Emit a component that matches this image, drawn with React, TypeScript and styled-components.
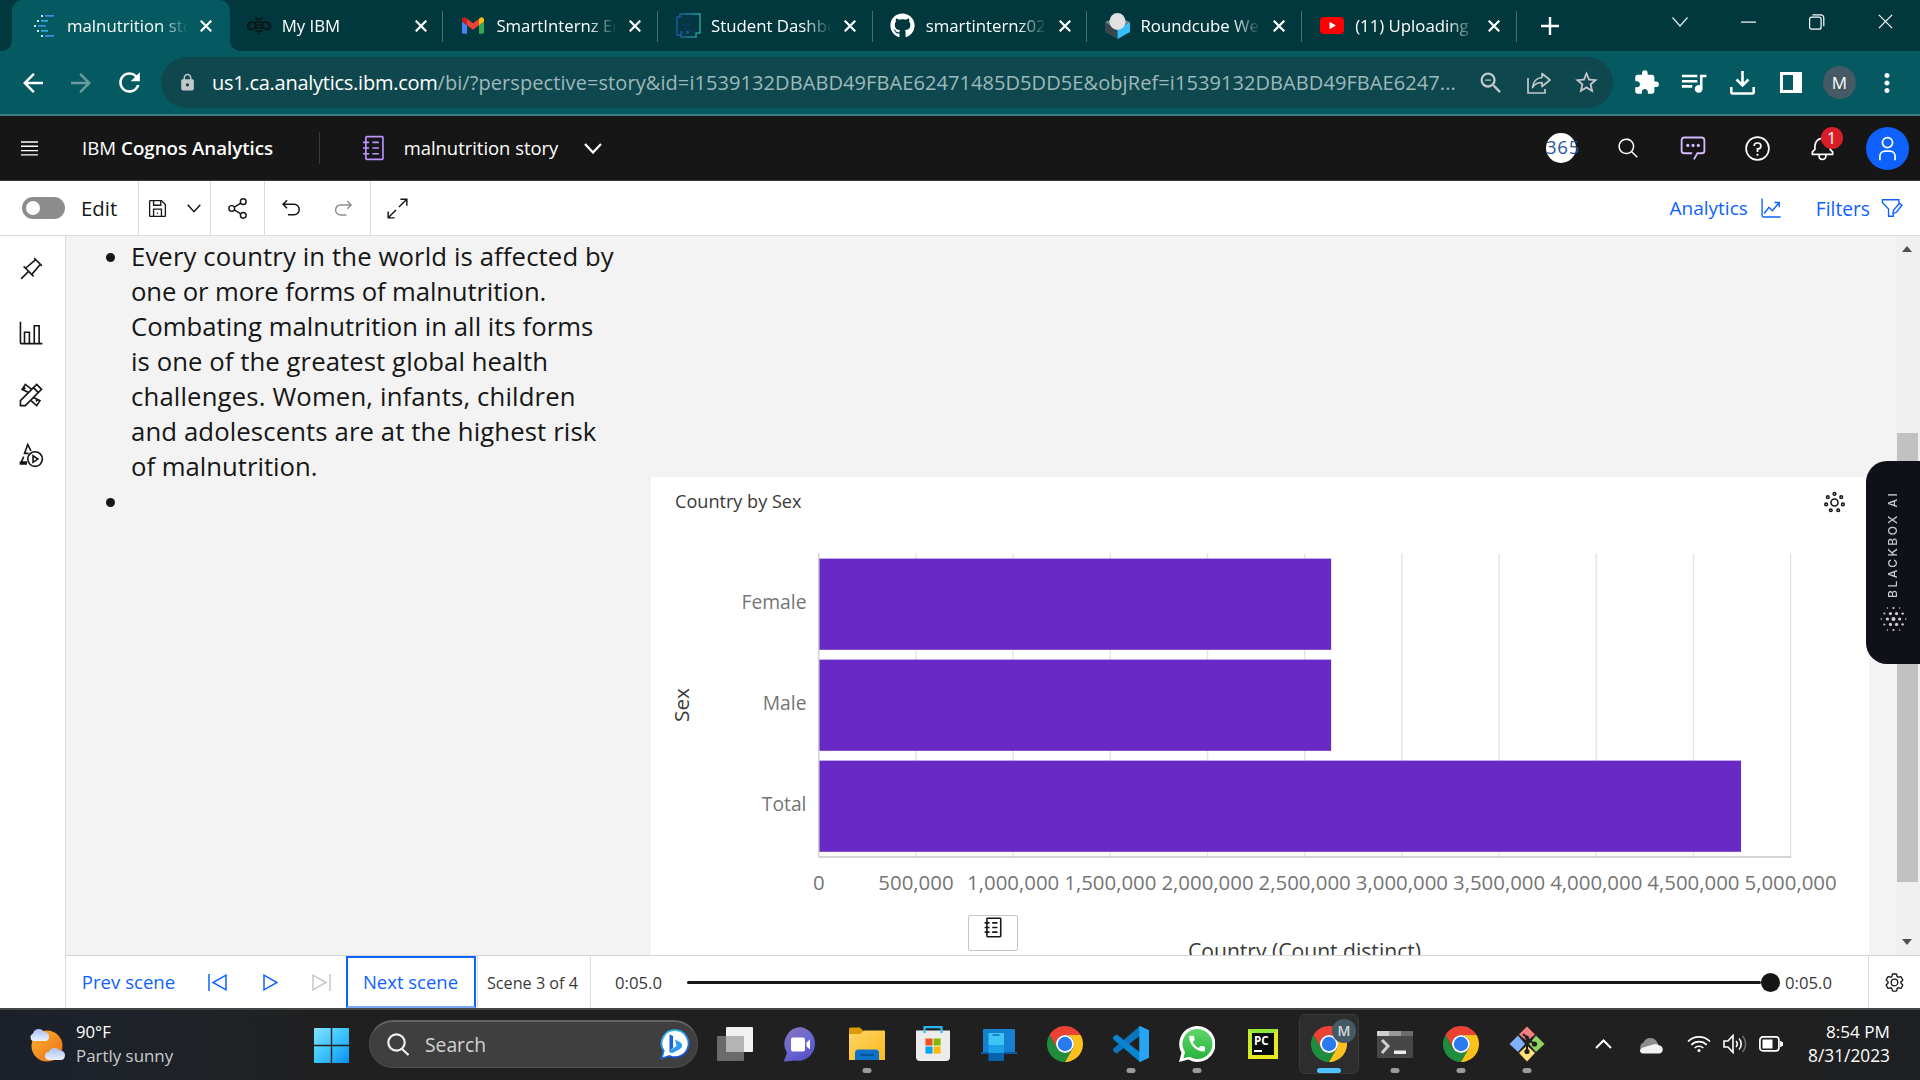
import React from 'react';
import styled, { createGlobalStyle, css } from 'styled-components';
import {
  MdArrowBack, MdArrowForward, MdExtension, MdLock, MdMoreVert,
  MdQueueMusic, MdRefresh, MdStarBorder, MdZoomOut,
} from 'react-icons/md';
import { FaGithub } from 'react-icons/fa';

const ui = `"Open Sans", "Noto Sans", sans-serif`;

const GlobalStyle = createGlobalStyle`
  *, *::before, *::after { box-sizing: border-box; }
  body { margin: 0; font-family: ${ui}; overflow: hidden; }
  svg { display: block; flex: none; }
`;

const Screen = styled.div`
  width: 1920px;
  height: 1080px;
  display: flex;
  flex-direction: column;
  overflow: hidden;
`;

const Cell = styled.div<{ $w: number; $up?: number }>`
  flex: none;
  width: ${p => p.$w}px;
  height: 100%;
  display: flex;
  align-items: center;
  justify-content: center;
  padding-bottom: ${p => p.$up ?? 0}px;
`;

const Spacer = styled.div`
  flex: 1;
`;

const Label = styled.span<{ $size: number; $track?: number }>`
  flex: none;
  white-space: nowrap;
  font-size: ${p => p.$size}px;
  letter-spacing: ${p => p.$track ?? 0}px;
`;

/* ---------- browser tabs ---------- */

const TabStrip = styled.div`
  flex: none;
  display: flex;
  height: 51px;
  padding-left: 14px;
  background: #00383d;
`;

const TabBox = styled.div<{ $active?: boolean; $divider?: boolean }>`
  position: relative;
  flex: none;
  width: 214.7px;
  height: 51px;
  display: flex;
  align-items: center;
  padding: 0 8px 0 16px;
  color: #fff;
  ${p => p.$active && css`
    &::before {
      content: '';
      position: absolute;
      inset: 0 -1px 0 -2px;
      border-radius: 11px 11px 0 0;
      background: #045a60;
    }
    &::after {
      content: '';
      position: absolute;
      bottom: 0;
      left: -12px;
      right: -11px;
      height: 10px;
      background:
        radial-gradient(circle at 0 0, transparent 9.5px, #045a60 10px) 0 0 / 10px 10px no-repeat,
        radial-gradient(circle at 100% 0, transparent 9.5px, #045a60 10px) 100% 0 / 10px 10px no-repeat;
    }
  `}
  ${p => p.$divider && css`
    border-right: 1px solid #457073;
    border-image: linear-gradient(transparent 12px, #457073 12px, #457073 41px, transparent 41px) 1;
  `}
`;

const Favicon = styled.div`
  position: relative;
  z-index: 1;
  width: 28px;
  display: flex;
  justify-content: center;
`;

const TabTitle = styled.div`
  position: relative;
  z-index: 1;
  width: 122px;
  margin-left: 9px;
  overflow: hidden;
  white-space: nowrap;
  font-size: 16.8px;
  line-height: 24px;
  mask-image: linear-gradient(90deg, #000 92px, transparent 121px);
`;

const CloseBox = styled.div`
  position: relative;
  z-index: 1;
  margin-left: 4px;
  width: 26px;
  display: flex;
  justify-content: center;
`;

const Cross = ({ size, weight }: { size: number; weight: number }) => (
  <svg width={size} height={size} viewBox="0 0 12 12" stroke="#fff" strokeWidth={weight} fill="none">
    <path d="M.7.7 11.300 11.300M11.300.7.7 11.300" />
  </svg>
);

const CognosFav = () => (
  <svg width="20" height="22" viewBox="0 0 20 22">
    {[[8, 0], [4, 5], [1, 10], [4, 15], [8, 20]].map(([x, y], i) => (
      <g key={y}>
        <rect x={x - 1} y={y} width="2" height="2" fill="#cfe8ff" />
        <rect x={x + 3} y={y} width={[9, 7, 8, 7, 9][i]} height="1.700" fill={i % 2 ? '#2fb0e0' : '#3d8fe6'} />
      </g>
    ))}
  </svg>
);

const BeeFav = () => (
  <svg width="26" height="18" viewBox="0 0 26 18" fill="none" stroke="#0b1414" strokeWidth="1.500">
    <path d="M10 7C6 3 1 6 1.500 10c.5 4 6 3 8.500-1M16 7c4-4 9-1 8.500 3-.5 4-6 3-8.500-1" />
    <path d="M9 5h8M8.500 8h9M8.500 11h9M9.500 14h7M11.500 16.500h3M11 2.500h4M10 .5l1 2M16 .5l-1 2" strokeWidth="1.700" />
    <path d="M4 7v5M22 7v5" strokeWidth="1" />
  </svg>
);

const GmailFav = () => (
  <svg width="22" height="17" viewBox="52 42 88 66">
    <path fill="#4285f4" d="M58 108h14V74L52 59v43c0 3.320 2.690 6 6 6" />
    <path fill="#34a853" d="M120 108h14c3.320 0 6-2.690 6-6V59l-20 15" />
    <path fill="#fbbc04" d="M120 48v26l20-15v-8c0-7.420-8.470-11.650-14.400-7.200" />
    <path fill="#ea4335" d="M72 74V48l24 18 24-18v26L96 92" />
    <path fill="#c5221f" d="M52 51v8l20 15V48l-5.600-4.200c-5.940-4.450-14.400-.22-14.400 7.200" />
  </svg>
);

const DashFav = () => (
  <svg width="25" height="25" viewBox="0 0 25 25" fill="none">
    <defs>
      <linearGradient id="dash" x1="0" y1="0" x2="1" y2="0">
        <stop offset="0" stopColor="#1d559e" /><stop offset="1" stopColor="#229fa0" />
      </linearGradient>
    </defs>
    <path d="M4 1h20v19h-4v4H5v-2H1V4h3z" stroke="url(#dash)" strokeWidth="1.500" />
    <path d="M4 5h11v6h-5v6h10M6 12h3v5" stroke="#11335c" strokeWidth="1.300" />
    <path d="M4 18h3v3H4zM10 18h3v3h-3z" fill="#15508a" />
  </svg>
);

const RoundcubeFav = () => (
  <svg width="25" height="26" viewBox="0 0 25 26">
    <path d="M0 9l12.500 7v10L0 19z" fill="#37474f" />
    <path d="M25 9l-12.500 7v10L25 19z" fill="#37beff" />
    <path d="M0 9l12.500-5L25 9l-12.500 8z" fill="#76868d" />
    <ellipse cx="12.500" cy="8.500" rx="8" ry="8.500" fill="#dfe1e2" />
  </svg>
);

const YoutubeFav = () => (
  <svg width="24" height="17" viewBox="0 0 24 17">
    <rect width="24" height="17" rx="4" fill="#f00" />
    <path d="M9.500 4.800l6.500 3.700-6.500 3.700z" fill="#fff" />
  </svg>
);

const tabs: { title: string; icon: React.ReactNode; active?: boolean }[] = [
  { title: 'malnutrition story', icon: <CognosFav />, active: true },
  { title: 'My IBM', icon: <BeeFav /> },
  { title: 'SmartInternz Email', icon: <GmailFav /> },
  { title: 'Student Dashboard', icon: <DashFav /> },
  { title: 'smartinternz02/SI', icon: <FaGithub size={25} color="#fff" /> },
  { title: 'Roundcube Webmail', icon: <RoundcubeFav /> },
  { title: '(11) Uploading', icon: <YoutubeFav /> },
];

const WindowButtons = styled.div`
  display: flex;
  height: 43px;
  margin-right: 1px;
`;

const Tabs = () => (
  <TabStrip>
    {tabs.map((t, i) => (
      <TabBox key={t.title} $active={t.active} $divider={i > 0}>
        <Favicon>{t.icon}</Favicon>
        <TabTitle>{t.title}</TabTitle>
        <CloseBox><Cross size={12} weight={2.200} /></CloseBox>
      </TabBox>
    ))}
    <Cell $w={66}>
      <svg width="18" height="18" viewBox="0 0 18 18" stroke="#fff" strokeWidth="2.400"><path d="M9 0v18M0 9h18" /></svg>
    </Cell>
    <Spacer />
    <WindowButtons>
      <Cell $w={69}><svg width="16" height="10" viewBox="0 0 16 10" fill="none" stroke="#e8eeee" strokeWidth="1.200"><path d="M.5.5 8 9 15.500.5" /></svg></Cell>
      <Cell $w={68}><svg width="15" height="2" viewBox="0 0 15 2"><path d="M0 .5h15v1.200H0z" fill="#fff" /></svg></Cell>
      <Cell $w={70}>
        <svg width="16" height="16" viewBox="0 0 16 16" fill="none" stroke="#fff" strokeWidth="1.200">
          <rect x=".6" y="3.200" width="11.500" height="12" rx="2" /><path d="M3.500.8h8.300a3 3 0 0 1 3 3v8.500" />
        </svg>
      </Cell>
      <Cell $w={67}><Cross size={15} weight={0.95} /></Cell>
    </WindowButtons>
  </TabStrip>
);

/* ---------- address bar ---------- */

const AddressRow = styled.div`
  flex: none;
  display: flex;
  align-items: center;
  height: 65px;
  padding: 0 8px 0 9px;
  background: #045a60;
  border-bottom: 2px solid #3c7f83;
  color: #fff;
`;

const Omnibox = styled.div`
  flex: none;
  display: flex;
  align-items: center;
  width: 1452px;
  height: 51px;
  margin-left: 7px;
  padding: 0 9px 0 17px;
  border-radius: 26px;
  background: #0f474e;
  color: #c3c7ca;
`;

const Url = styled.div`
  flex: none;
  width: 1256px;
  margin-left: 15px;
  white-space: nowrap;
  font-size: 20px;
  letter-spacing: 0.08px;
  color: #9db9bb;
  b { font-weight: 400; color: #fff; letter-spacing: -0.26px; }
`;

const Profile = styled.div`
  display: grid;
  place-items: center;
  width: 33px;
  height: 33px;
  border-radius: 50%;
  background: #455a64;
  color: #fff;
  font-size: 17px;
`;

const AddressBar = () => (
  <AddressRow>
    <Cell $w={48}><MdArrowBack size={30} /></Cell>
    <Cell $w={48}><MdArrowForward size={30} color="#6a9b9e" /></Cell>
    <Cell $w={49}><MdRefresh size={31} /></Cell>
    <Omnibox>
      <MdLock size={19} />
      <Url><b>us1.ca.analytics.ibm.com</b>/bi/?perspective=story&amp;id=i1539132DBABD49FBAE62471485D5DD5E&amp;objRef=i1539132DBABD49FBAE6247...</Url>
      <Cell $w={46}><MdZoomOut size={28} /></Cell>
      <Cell $w={49}>
        <svg width="24" height="22" viewBox="0 0 24 22" fill="none" stroke="currentColor" strokeWidth="1.700">
          <path d="M1 6v15h17v-4" /><path d="M15 1.500 23 8l-8 6.500v-4c-4 0-7.500 1.500-9.500 5C6 10 9.500 6 15 5.500z" strokeLinejoin="round" />
        </svg>
      </Cell>
      <Cell $w={47}><MdStarBorder size={27} /></Cell>
    </Omnibox>
    <Cell $w={66}><MdExtension size={27} /></Cell>
    <Cell $w={29}><MdQueueMusic size={31} /></Cell>
    <Cell $w={69}>
      <svg width="25" height="24" viewBox="0 0 25 24" fill="none" stroke="#fff" strokeWidth="2.600">
        <path d="M12.500 0v14M6.500 8.500l6 6 6-6" /><path d="M1.300 16v5a1.500 1.500 0 0 0 1.500 1.500h19.400a1.500 1.500 0 0 0 1.500-1.500v-5" />
      </svg>
    </Cell>
    <Cell $w={28}>
      <svg width="22" height="21" viewBox="0 0 22 21"><path fill="#fff" d="M0 0h22v21H0zM3 3v15h10V3z" fillRule="evenodd" /></svg>
    </Cell>
    <Cell $w={69}><Profile>M</Profile></Cell>
    <Cell $w={26}><MdMoreVert size={30} /></Cell>
  </AddressRow>
);

/* ---------- Carbon style icons ---------- */

const Icon = ({ size, color = '#161616', w = 2, children }: { size: number; color?: string; w?: number; children: React.ReactNode }) => (
  <svg width={size} height={size} viewBox="0 0 32 32" fill="none" stroke={color} strokeWidth={w}>{children}</svg>
);
const Glyph = ({ size, color = '#161616', d }: { size: number; color?: string; d: string }) => (
  <svg width={size} height={size} viewBox="0 0 32 32" fill={color}><path d={d} /></svg>
);

const glyphs = {
  undo: 'M20 10H7.815l3.587-3.586L10 5 4 11l6 6 1.402-1.415L7.818 12H20a6 6 0 0 1 0 12H12v2h8a8 8 0 0 0 0-16Z',
  redo: 'M12 10H24.185L20.598 6.414 22 5l6 6-6 6-1.402-1.415L24.182 12H12a6 6 0 0 0 0 12h8v2H12a8 8 0 0 1 0-16Z',
  search: 'M29,27.586l-7.552-7.552a11.018,11.018,0,1,0-1.414,1.414L27.586,29ZM4,13a9,9,0,1,1,9,9A9.010,9.010,0,0,1,4,13Z',
  bell: 'M28.707,19.293,26,16.586V13a10.014,10.014,0,0,0-9-9.949V1H15V3.051A10.014,10.014,0,0,0,6,13v3.586L3.293,19.293A1,1,0,0,0,3,20v3a1,1,0,0,0,1,1h7v.777a5.152,5.152,0,0,0,4.500,5.199A5.006,5.006,0,0,0,21,25V24h7a1,1,0,0,0,1-1V20A1,1,0,0,0,28.707,19.293ZM19,25a3,3,0,0,1-6,0V24h6Zm8-3H5V20.414L7.707,17.707A1,1,0,0,0,8,17V13a8,8,0,0,1,16,0v4a1,1,0,0,0,.293.707L27,20.414Z',
  user: 'M16,4a5,5,0,1,1-5,5,5,5,0,0,1,5-5m0-2a7,7,0,1,0,7,7A7,7,0,0,0,16,2ZM26,30H24V25a5,5,0,0,0-5-5H13a5,5,0,0,0-5,5v5H6V25a7,7,0,0,1,7-7h6a7,7,0,0,1,7,7Z',
  pin: 'M28.586,13.314,30,11.900,20,2,18.686,3.415l1.186,1.186L8.380,14.323,6.664,12.607,5.250,14l5.657,5.677L2,28.583,3.410,30l8.911-8.909L18,26.748l1.393-1.414L17.677,23.618l9.724-11.490ZM16.256,22.198,9.801,15.743,21.292,6.021,25.978,10.708Z',
  bars: 'M27 28V6H19V28H15V14H7V28H4V2H2V28a2 2 0 002 2H30V28zM13 28H9V16h4zm12 0H21V8h4z',
  gear: 'M27,16.760c0-.25,0-.5,0-.76s0-.51,0-.77l1.920-1.680A2,2,0,0,0,29.300,11L26.940,7a2,2,0,0,0-1.730-1,2,2,0,0,0-.64.1l-2.430.82a11.350,11.350,0,0,0-1.310-.75l-.51-2.520a2,2,0,0,0-2-1.610H13.640a2,2,0,0,0-2,1.610l-.51,2.520a11.480,11.480,0,0,0-1.320.75L7.430,6.060A2,2,0,0,0,6.790,6,2,2,0,0,0,5.060,7L2.700,11a2,2,0,0,0,.41,2.510L5,15.240c0,.25,0,.5,0,.76s0,.51,0,.77L3.110,18.450A2,2,0,0,0,2.700,21L5.060,25a2,2,0,0,0,1.730,1,2,2,0,0,0,.64-.1l2.430-.82a11.350,11.350,0,0,0,1.310.75l.51,2.520a2,2,0,0,0,2,1.610h4.720a2,2,0,0,0,2-1.610l.51-2.520a11.480,11.480,0,0,0,1.320-.75l2.420.82a2,2,0,0,0,.64.1,2,2,0,0,0,1.730-1L29.300,21a2,2,0,0,0-.41-2.510ZM25.210,24l-3.430-1.160a8.860,8.860,0,0,1-2.710,1.570L18.360,28H13.640l-.71-3.550a9.360,9.360,0,0,1-2.700-1.570L6.790,24,4.430,20l2.720-2.400a8.900,8.900,0,0,1,0-3.130L4.430,12,6.790,8l3.430,1.160a8.860,8.860,0,0,1,2.710-1.570L13.640,4h4.720l.71,3.550a9.360,9.360,0,0,1,2.700,1.570L25.210,8,27.570,12l-2.720,2.400a8.900,8.900,0,0,1,0,3.130L27.570,20ZM16,22a6,6,0,1,1,6-6A5.940,5.940,0,0,1,16,22Zm0-10a3.910,3.910,0,0,0-4,4,3.910,3.910,0,0,0,4,4,3.910,3.910,0,0,0,4-4A3.910,3.910,0,0,0,16,12Z',
};

const Notebook = ({ size, color, w = 2 }: { size: number; color: string; w?: number }) => (
  <Icon size={size} color={color} w={w}>
    <rect x="6" y="2" width="21" height="28" rx="1" />
    <path d="M2.500 9H10M2.500 16H10M2.500 23H10M14 9h8M14 16h8M14 23h8" />
  </Icon>
);

/* ---------- Cognos header ---------- */

const Header = styled.header`
  flex: none;
  display: flex;
  height: 65px;
  padding-left: 15px;
  background: #161616;
  border-bottom: 1px solid #393939;
  color: #fff;
`;

const Brand = styled.div`
  width: 192px;
  margin-left: 39px;
  padding-bottom: 2px;
  display: flex;
  align-items: center;
  white-space: nowrap;
  font-size: 18.700px;
  b { font-weight: 600; margin-left: 5px; }
`;

const HeaderRule = styled.div`
  width: 1px;
  height: 32px;
  margin: 16px 43px 0 45px;
  background: #393939;
`;

const Disc = styled.div`
  width: 30px;
  height: 30px;
  border-radius: 50%;
  background: #fff;
  color: #2b579a;
  font-size: 18.600px;
  letter-spacing: 0.7px;
  line-height: 28px;
  white-space: nowrap;
`;

const BellWrap = styled.div`
  position: relative;
`;

const Badge = styled.span`
  position: absolute;
  left: 12px;
  top: -8px;
  width: 22px;
  height: 22px;
  border-radius: 50%;
  background: #da1e28;
  font-size: 16px;
  line-height: 22px;
  text-align: center;
`;

const Avatar = styled.div`
  width: 43px;
  height: 43px;
  border-radius: 50%;
  background: #0f62fe;
  display: grid;
  place-items: center;
`;

const CognosHeader = () => (
  <Header>
    <Cell $w={28}>
      <svg width="17" height="15" viewBox="0 0 17 15" stroke="#fff" strokeWidth="1.400"><path d="M0 1h17M0 5.300h17M0 9.600h17M0 13.900h17" /></svg>
    </Cell>
    <Brand>IBM <b>Cognos Analytics</b></Brand>
    <HeaderRule />
    <Cell $w={22}><Notebook size={26} color="#be95ff" /></Cell>
    <Cell $w={192} $up={1}><Label $size={18.400}>malnutrition story</Label></Cell>
    <Cell $w={32}><svg width="18" height="11" viewBox="0 0 18 11" fill="none" stroke="#fff" strokeWidth="2.200"><path d="M1 1l8 8.500L17 1" /></svg></Cell>
    <Spacer />
    <Cell $w={72}><Disc>365</Disc></Cell>
    <Cell $w={62}><Glyph size={23} color="#fff" d={glyphs.search} /></Cell>
    <Cell $w={67}>
      <Icon size={28} color="#d4bbff" w={2.100}>
        <path d="M17 29l4-7h5a3 3 0 0 0 3-3V7a3 3 0 0 0-3-3H6a3 3 0 0 0-3 3v12a3 3 0 0 0 3 3h9" />
        <path d="M10 13h.1M16 13h.1M22 13h.1" strokeWidth="3.600" strokeLinecap="round" />
      </Icon>
    </Cell>
    <Cell $w={63}>
      <Icon size={27} color="#fff">
        <circle cx="16" cy="16" r="13.500" /><path d="M12 13a3.500 3.500 0 0 1 3.500-3.500h1a3.500 3.500 0 0 1 0 7H16v3.500" /><circle cx="16" cy="23.500" r=".9" fill="#fff" strokeWidth="1" />
      </Icon>
    </Cell>
    <Cell $w={66}><BellWrap><Glyph size={27} color="#fff" d={glyphs.bell} /><Badge>1</Badge></BellWrap></Cell>
    <Cell $w={65}><Avatar><Glyph size={27} color="#fff" d={glyphs.user} /></Avatar></Cell>
  </Header>
);

/* ---------- story toolbar ---------- */

const Toolbar = styled.div`
  flex: none;
  display: flex;
  height: 55px;
  background: #fff;
  border-bottom: 1px solid #dcdcdc;
  color: #161616;
`;

const ToolGroup = styled.div<{ $w: number }>`
  display: flex;
  align-items: center;
  width: ${p => p.$w}px;
  border-right: 1px solid #dcdcdc;
`;

const Toggle = styled.div`
  width: 43px;
  height: 22px;
  margin: 0 16px 0 22px;
  padding: 4px;
  border-radius: 11px;
  background: #8d8d8d;
  &::before {
    content: '';
    display: block;
    width: 14px;
    height: 14px;
    border-radius: 50%;
    background: #fff;
  }
`;

const LinkButton = styled.div<{ $gap: number; $right: number }>`
  display: flex;
  align-items: center;
  gap: ${p => p.$gap}px;
  margin-right: ${p => p.$right}px;
  color: #0f62fe;
`;

const StoryToolbar = () => (
  <Toolbar>
    <ToolGroup $w={139}><Toggle /><Label $size={20.400}>Edit</Label></ToolGroup>
    <ToolGroup $w={72}>
      <Cell $w={37}>
        <Icon size={21}>
          <path d="M4 5a1 1 0 0 1 1-1h17l6 6v17a1 1 0 0 1-1 1H5a1 1 0 0 1-1-1z" /><path d="M10 4v7h11V4M10 28V17h12v11M16 22v2" />
        </Icon>
      </Cell>
      <Cell $w={35}><svg width="14" height="9" viewBox="0 0 14 9" fill="none" stroke="#161616" strokeWidth="1.500"><path d="M.7.7 7 7.700 13.300.7" /></svg></Cell>
    </ToolGroup>
    <ToolGroup $w={54}>
      <Cell $w={52}>
        <Icon size={23}>
          <circle cx="24" cy="6.500" r="4" /><circle cx="8" cy="16" r="4" /><circle cx="24" cy="25.500" r="4" /><path d="M11.500 14 20.500 8.500M11.500 18l9 5.500" />
        </Icon>
      </Cell>
    </ToolGroup>
    <ToolGroup $w={106}>
      <Cell $w={52}><Glyph size={24} d={glyphs.undo} /></Cell>
      <Cell $w={53}><Glyph size={23} color="#8d8d8d" d={glyphs.redo} /></Cell>
    </ToolGroup>
    <Cell $w={52}>
      <Icon size={23}><path d="M20 3h9v9M29 3 18 14M12 29H3v-9M3 29 14 18" /></Icon>
    </Cell>
    <Spacer />
    <LinkButton $gap={12} $right={34}>
      <Label $size={19}>Analytics</Label>
      <Icon size={22} color="#0f62fe"><path d="M3 2v25a2 2 0 0 0 2 2h25M6 24l7-9 5 5L28 8M21 8h7v7" /></Icon>
    </LinkButton>
    <LinkButton $gap={11} $right={17}>
      <Label $size={19.200}>Filters</Label>
      <Icon size={22} color="#0f62fe">
        <path d="M26 10V4H2v4l9 9.500V28h7v-4" /><path d="M18 19.500 27 9l3.500 3L22 22.500l-4.500 1.200z" />
      </Icon>
    </LinkButton>
  </Toolbar>
);

/* ---------- workspace ---------- */

const Workspace = styled.div`
  flex: none;
  display: flex;
  height: 772px;
`;

const Rail = styled.nav`
  flex: none;
  width: 66px;
  background: #fff;
  border-right: 1px solid #dcdcdc;
  display: flex;
  flex-direction: column;
`;

const RailItem = styled.div<{ $h: number }>`
  height: ${p => p.$h}px;
  padding-right: 3px;
  display: grid;
  place-items: center;
`;

const Main = styled.div`
  flex: 1;
  display: flex;
  flex-direction: column;
`;

const Canvas = styled.div`
  position: relative;
  height: 719px;
  display: flex;
  background: #f3f3f3;
  overflow: hidden;
`;

const Story = styled.ul`
  flex: none;
  width: 585px;
  margin: 0;
  padding: 2.500px 0 0 65px;
  list-style: none;
  color: #161616;
  font-size: 25.700px;
  line-height: 35px;
  li { position: relative; min-height: 35px; white-space: nowrap; }
  li::before {
    content: '';
    position: absolute;
    left: -25px;
    top: 14px;
    width: 9px;
    height: 9px;
    border-radius: 50%;
    background: #161616;
  }
`;

const Line = styled.span<{ $track: number }>`
  display: block;
  letter-spacing: ${p => p.$track}px;
`;

const Card = styled.section`
  flex: none;
  width: 1218px;
  height: 520px;
  margin-top: 241px;
  background: #fff;
`;

const CardHead = styled.div`
  display: flex;
  align-items: center;
  justify-content: space-between;
  height: 51px;
  padding: 0 22px 0 24px;
  color: #393939;
  > span { margin-bottom: 3px; }
`;

const Scrollbar = styled.div`
  flex: none;
  width: 25px;
  margin-left: 26px;
  background: #f0f0f0;
  display: flex;
  flex-direction: column;
  align-items: center;
`;

const Arrow = styled.div<{ $down?: boolean }>`
  width: 0;
  height: 0;
  margin: ${p => (p.$down ? '57px 1px 0 0' : '10px 1px 0 0')};
  border: 5.500px solid transparent;
  ${p => (p.$down ? 'border-top: 6px solid #505050; border-bottom: 0;' : 'border-bottom: 6px solid #505050; border-top: 0;')}
`;

const Thumb = styled.div`
  width: 21px;
  height: 449px;
  margin-top: 181px;
  background: #c1c1c1;
`;

const FloatingNote = styled.div`
  position: absolute;
  left: 902px;
  top: 679px;
  width: 50px;
  height: 36px;
  padding-top: 1px;
  display: flex;
  justify-content: center;
  border: 1px solid #c6c6c6;
  border-radius: 2px;
  background: #fff;
`;

const ChartSvg = styled.svg`
  font-family: ${ui};
  font-size: 20.400px;
`;

const bars = [
  { name: 'Female', value: 2636000 },
  { name: 'Male', value: 2636000 },
  { name: 'Total', value: 4745000 },
];
const X0 = 167.800;
const STEP = 97.180;
const ticks = Array.from({ length: 11 }, (_, i) => i);

const BarChart = () => (
  <ChartSvg width="1218" height="469" viewBox="0 0 1218 469">
    {ticks.slice(1).map(i => (
      <path key={i} d={`M${X0 + i * STEP} 25.500V329`} stroke="#e4e4e4" strokeWidth="1.400" />
    ))}
    {bars.map((b, i) => (
      <g key={b.name}>
        <rect x={X0 + 0.4} y={30.600 + i * 101} width={(b.value / 500000) * STEP - 0.4} height="91.200" fill="#6929c4" />
        <text x="155.500" y={81 + i * 101} textAnchor="end" fill="#757575" fontSize="19.300">{b.name}</text>
      </g>
    ))}
    <path d={`M${X0} 25.500V329`} stroke="#c6c6c6" strokeWidth="1.200" />
    <path d={`M${X0} 329H${X0 + 10 * STEP + 0.5}`} stroke="#c6c6c6" strokeWidth="1.500" />
    {ticks.map(i => (
      <text key={i} x={X0 + i * STEP} y="362" textAnchor="middle" fill="#757575">{(i * 500000).toLocaleString('en-US')}</text>
    ))}
    <text x="653.500" y="431" textAnchor="middle" fill="#393939" fontSize="21.100">Country (Count distinct)</text>
    <text transform="translate(37.500 177) rotate(-90)" textAnchor="middle" fill="#393939" fontSize="20.800">Sex</text>
  </ChartSvg>
);

/* ---------- player ---------- */

const Player = styled.div`
  flex: none;
  display: flex;
  height: 53px;
  background: #fff;
  border-top: 1px solid #d4d4d4;
  color: #0f62fe;
`;

const NextScene = styled.div`
  flex: none;
  width: 130px;
  margin-right: 1px;
  padding: 0 1px 1px 0;
  display: grid;
  place-items: center;
  border: 2px solid #0f62fe;
  border-bottom-color: #7ba7fd;
`;

const Status = styled.div<{ $w: number }>`
  flex: none;
  width: ${p => p.$w}px;
  display: grid;
  place-items: center;
  padding: 1px 3px 0 0;
  color: #393939;
  border: solid #dcdcdc;
  border-width: 0 1px;
`;

const Time = styled.div<{ $l: number; $w: number }>`
  width: ${p => p.$w}px;
  padding: 1px 0 0 ${p => p.$l}px;
  display: flex;
  align-items: center;
  color: #393939;
`;

const Slider = styled.div`
  width: 1093px;
  display: flex;
  align-items: center;
  &::before { content: ''; flex: 1; height: 3px; border-radius: 2px; background: #161616; }
  &::after { content: ''; width: 19px; height: 19px; border-radius: 50%; background: #161616; }
`;

const GearBox = styled.div`
  flex: 1;
  display: grid;
  place-items: center;
  border-left: 1px solid #dcdcdc;
`;

const PlayerBar = () => (
  <Player>
    <Cell $w={125} $up={1}><Label $size={18.600}>Prev scene</Label></Cell>
    <Cell $w={52}>
      <svg width="19" height="17" viewBox="0 0 19 17" fill="none" stroke="#0f62fe" strokeWidth="1.500"><path d="M1 0v17M18 1.200v14.600L5 8.500z" /></svg>
    </Cell>
    <Cell $w={54}>
      <svg width="15" height="17" viewBox="0 0 15 17" fill="none" stroke="#0f62fe" strokeWidth="1.500"><path d="M1 1.200v14.600l13-7.300z" /></svg>
    </Cell>
    <Cell $w={49}>
      <svg width="19" height="17" viewBox="0 0 19 17" fill="none" stroke="#c6c6c6" strokeWidth="1.500"><path d="M18 0v17M1 1.200v14.600l13-7.300z" /></svg>
    </Cell>
    <NextScene><Label $size={18.500}>Next scene</Label></NextScene>
    <Status $w={114}><Label $size={16.200}>Scene 3 of 4</Label></Status>
    <Time $l={24} $w={96}><Label $size={16.700}>0:05.0</Label></Time>
    <Slider />
    <Time $l={5} $w={88}><Label $size={16.700}>0:05.0</Label></Time>
    <GearBox><Glyph size={21} d={glyphs.gear} /></GearBox>
  </Player>
);

const WorkspaceArea = () => (
  <Workspace>
    <Rail>
      <RailItem $h={64}><Glyph size={25} d={glyphs.pin} /></RailItem>
      <RailItem $h={65}><Glyph size={26} d={glyphs.bars} /></RailItem>
      <RailItem $h={60}>
        <Icon size={26}>
          <path d="M3 29v-6L23 3l6 6L9 29zM19 7l6 6" /><path d="M13 13 5 9l4-6 8 6M19 19l8 4-4 6-7-6M7 9l2-2M22 24l2-2" />
        </Icon>
      </RailItem>
      <RailItem $h={60}>
        <Icon size={26}>
          <path d="M13 14H8L12 3l4 8M7 18l-3 7h7" /><path d="M2 26h9" strokeWidth="4" /><circle cx="21" cy="21" r="9" /><path d="M18.500 17v8l6-4z" />
        </Icon>
      </RailItem>
    </Rail>
    <Main>
      <Canvas>
        <Story>
          <li>
            <Line $track={0.12}>Every country in the world is affected by</Line>
            <Line $track={-0.13}>one or more forms of malnutrition.</Line>
            <Line $track={0.03}>Combating malnutrition in all its forms</Line>
            <Line $track={0.08}>is one of the greatest global health</Line>
            <Line $track={0.16}>challenges. Women, infants, children</Line>
            <Line $track={0.12}>and adolescents are at the highest risk</Line>
            <Line $track={0}>of malnutrition.</Line>
          </li>
          <li />
        </Story>
        <Card>
          <CardHead>
            <Label $size={18.100}>Country by Sex</Label>
            <Icon size={25} w={2}>
              <circle cx="16" cy="16" r="4.500" />
              {[0, 1, 2, 3, 4, 5, 6].map(k => {
                const a = (k * 2 * Math.PI) / 7 - Math.PI / 2;
                return <circle key={k} cx={16 + 11 * Math.cos(a)} cy={16 + 11 * Math.sin(a)} r="1.700" />;
              })}
            </Icon>
          </CardHead>
          <BarChart />
        </Card>
        <Scrollbar><Arrow /><Thumb /><Arrow $down /></Scrollbar>
        <FloatingNote><Notebook size={21} color="#161616" w={2.400} /></FloatingNote>
      </Canvas>
      <PlayerBar />
    </Main>
  </Workspace>
);

/* ---------- side badge ---------- */

const SideBadge = styled.aside`
  position: absolute;
  left: 1866px;
  top: 461px;
  width: 54px;
  height: 203px;
  border-radius: 21px 0 0 21px;
  background: #101118;
  display: flex;
  flex-direction: column;
  align-items: center;
  padding-top: 29px;
  gap: 8px;
  color: #c8c9cc;
`;

const SideText = styled.span`
  writing-mode: vertical-rl;
  transform: rotate(180deg);
  height: 108px;
  line-height: 16px;
  font-size: 12px;
  font-weight: 500;
  letter-spacing: 2.500px;
  white-space: nowrap;
  font-family: Inter, sans-serif;
`;

const dots: [number, number[]][] = [
  [2, [0.7, 1.100, 0.7]], [7.600, [1, 1.600, 1.600, 1.200]], [13, [0.8, 1.600, 2, 1.600, 0.8]], [18.400, [1, 1.600, 1.600, 1.200]], [24, [0.7, 1.100, 0.7]],
];

const Blackbox = () => (
  <SideBadge>
    <SideText>BLACKBOX AI</SideText>
    <svg width="27" height="26" viewBox="0 0 27 26" fill="#d0d0d4">
      {dots.map(([y, rs]) => rs.map((r, i) => <circle key={`${y}-${i}`} cx={13.500 + (i - (rs.length - 1) / 2) * 6.100} cy={y} r={r} />))}
    </svg>
  </SideBadge>
);

/* ---------- taskbar ---------- */

const TaskbarRow = styled.footer`
  flex: none;
  display: flex;
  height: 72px;
  border-top: 2px solid #444545;
  background: linear-gradient(90deg, #1b202a 0, #1e2229 120px, #202020 340px, #202020 1780px, #1d2024 1920px);
  color: #fff;
`;

const Weather = styled.div`
  flex: none;
  width: 285px;
  margin-left: 29px;
  display: flex;
  align-items: center;
  gap: 11px;
`;

const TwoLines = styled.div<{ $dim?: boolean; $right?: boolean }>`
  display: flex;
  flex-direction: column;
  text-align: ${p => (p.$right ? 'right' : 'left')};
  line-height: 24px;
  padding-bottom: 3px;
  span:last-child { color: ${p => (p.$dim ? '#c9cbce' : '#fff')}; }
`;

const SearchPill = styled.div`
  flex: none;
  display: flex;
  align-items: center;
  width: 329px;
  height: 48px;
  margin: 10px 4px 0 20px;
  padding: 0 7px 0 17px;
  border-radius: 24px;
  border: 1px solid #4e4e4e;
  border-top: 2px solid #626262;
  background: #3f3f3f;
  color: #d2d2d2;
`;

const AppCell = styled.div<{ $mark?: 'open' | 'active' }>`
  position: relative;
  flex: none;
  width: 66px;
  height: 70px;
  padding-bottom: 2px;
  display: grid;
  place-items: center;
  ${p => p.$mark === 'active' && css`
    &::before {
      content: '';
      position: absolute;
      inset: 4px 3px 6px;
      border-radius: 6px;
      border: 1px solid #3a3a3a;
      background: #2d2d2d;
    }
  `}
  ${p => p.$mark && css`
    &::after {
      content: '';
      position: absolute;
      bottom: 7px;
      left: 50%;
      transform: translateX(-50%);
      width: ${p.$mark === 'active' ? 24 : 9}px;
      height: 5px;
      border-radius: 3px;
      background: ${p.$mark === 'active' ? '#4cc2ff' : '#9a9a9a'};
    }
  `}
  > svg { position: relative; }
`;

const ProfileChip = styled.span`
  position: absolute;
  left: 36px;
  top: 9px;
  width: 24px;
  height: 24px;
  border-radius: 50%;
  background: #455a64;
  color: #d5dadd;
  font-size: 14px;
  font-weight: 600;
  line-height: 24px;
  text-align: center;
`;

const Chrome = () => (
  <svg width="36" height="36" viewBox="0 0 48 48">
    <path fill="#ea4335" d="M24 12h20.780A24 24 0 0 0 3.220 12l10.390 18A12 12 0 0 1 24 12" />
    <path fill="#1e8e3e" d="M34.390 30 24 48A24 24 0 0 1 3.220 12l10.390 18a12 12 0 0 0 20.780 0" />
    <path fill="#fcc21b" d="M34.390 30 24 48A24 24 0 0 0 44.780 12H24a12 12 0 0 1 10.390 18" />
    <circle cx="24" cy="24" r="12" fill="#fff" /><circle cx="24" cy="24" r="9.600" fill="#2b7bf0" />
  </svg>
);

const TaskView = () => (
  <svg width="36" height="34" viewBox="0 0 36 34">
    <rect x="9" width="27" height="25" rx="1" fill="#f2f2f2" />
    <rect y="9" width="27" height="25" rx="1" fill="#6a6a6a" />
    <path d="M9 9h18v16H9z" fill="#b4b4b4" />
  </svg>
);

const ChatApp = () => (
  <svg width="34" height="35" viewBox="0 0 34 35">
    <defs><linearGradient id="chat" x1="0" y1="0" x2=".6" y2="1"><stop offset="0" stopColor="#8d73b8" /><stop offset=".55" stopColor="#6a6ad0" /><stop offset="1" stopColor="#5b50c8" /></linearGradient></defs>
    <path d="M17 0a17 17 0 1 1-6 33.500L.8 34.500c-.8.1-.9-.5-.6-1.200L3 26A17 17 0 0 1 17 0" fill="url(#chat)" />
    <rect x="7" y="10.500" width="14" height="14" rx="2" fill="#fff" /><path d="M22.500 15.500 26 12.500v10l-3.500-3z" fill="#fff" />
  </svg>
);

const Explorer = () => (
  <svg width="36" height="34" viewBox="0 0 36 34">
    <defs><linearGradient id="fold" x1="0" y1="0" x2="1" y2="1"><stop offset="0" stopColor="#ffd666" /><stop offset="1" stopColor="#fbb91c" /></linearGradient></defs>
    <path d="M0 2a1.500 1.500 0 0 1 1.500-1.500H11l4 4V9H0z" fill="#dd9a05" />
    <path d="M0 7h11l4-3.500h20a1 1 0 0 1 1 1V33H0z" fill="url(#fold)" />
    <path d="M6 33v-7a3.500 3.500 0 0 1 3.500-3.500h17A3.500 3.500 0 0 1 30 26v7z" fill="#0c72c8" /><path d="M11 28h14" stroke="#084b8a" strokeWidth="1.600" />
  </svg>
);

const Store = () => (
  <svg width="36" height="36" viewBox="0 0 36 36">
    <path d="M9.500 7V1.200h17V7" fill="none" stroke="#2bb5f2" strokeWidth="2.200" />
    <path d="M1 4.500h34V31a4 4 0 0 1-4 4H5a4 4 0 0 1-4-4z" fill="#ececec" />
    <path d="M9.500 7V4.500M26.500 7V4.500" stroke="#2bb5f2" strokeWidth="2.200" />
    <path d="M10.500 12.500h7v7h-7z" fill="#f25022" /><path d="M18.600 12.500h7v7h-7z" fill="#7fba00" />
    <path d="M10.500 20.600h7v7h-7z" fill="#00a4ef" /><path d="M18.600 20.600h7v7h-7z" fill="#ffb900" />
  </svg>
);

const PhoneLink = () => (
  <svg width="36" height="33" viewBox="0 0 36 33">
    <path d="M2 2a1 1 0 0 1 1-1h30a1 1 0 0 1 1 1v22H2z" fill="#1480cf" /><path d="M0 24h36v2H0z" fill="#0b5c9e" />
    <path d="M7.500 5h15.500v12H7.500z" fill="#3cc5f5" /><path d="M7.500 17H23v8H7.500z" fill="#1c9fe6" /><path d="M7.500 25H23v8H7.500z" fill="#0862ad" />
    <path d="M11.500 7h7" stroke="#0f6fb5" strokeWidth="1.500" />
  </svg>
);

const VsCode = () => (
  <svg width="36" height="36" viewBox="0 0 100 100">
    <path d="M75 0 2 62c-3 3-3 5 0 8l4 4c2 2 4 2 7 0l62-47z" fill="#0b74bd" />
    <path d="M75 100 2 38c-3-3-3-5 0-8l4-4c2-2 4-2 7 0l62 47z" fill="#0a84d0" />
    <path d="M75 0l25 12v76L75 100c-2 0-2-1-2-3V3c0-2 0-3 2-3z" fill="#27a5f3" />
  </svg>
);

const WhatsApp = () => (
  <svg width="36" height="36" viewBox="0 0 36 36">
    <defs><linearGradient id="wa" x1="0" y1="0" x2="0" y2="1"><stop offset="0" stopColor="#5fd668" /><stop offset="1" stopColor="#27b43e" /></linearGradient></defs>
    <path d="M18 0a18 18 0 1 1-8.500 33.600L0 36l2.500-9.200A18 18 0 0 1 18 0" fill="#fff" />
    <path d="M18.100 3a15 15 0 1 1-7.500 27.800l-6.200 1.500 1.600-6A15 15 0 0 1 18.100 3" fill="url(#wa)" />
    <path transform="translate(7.500 7) scale(.88)" fill="#fff" d="M20.010 15.380c-1.230 0-2.420-.2-3.530-.56a.977.977 0 0 0-1.010.24l-1.570 1.970c-2.830-1.350-5.480-3.900-6.890-6.830l1.950-1.660c.27-.28.35-.67.24-1.020-.37-1.110-.56-2.300-.56-3.530 0-.54-.45-.99-.99-.99H4.190C3.650 3 3 3.240 3 3.990 3 13.280 10.730 21 20.010 21c.71 0 .99-.63.99-1.180v-3.450c0-.54-.45-.99-.99-.99z" />
  </svg>
);

const PyCharmBox = styled.div`
  width: 30px;
  height: 30px;
  border: 4px solid #e9ea1c;
  border-left-color: #c9ea28;
  border-top-color: #8fe83a;
  background: #080c0a;
  color: #fff;
  font: 700 11.500px/13px ${ui};
  padding: 1px 0 0 2px;
  &::after { content: ''; display: block; width: 8px; height: 1.500px; margin-top: 3px; background: #fff; }
`;

const Terminal = () => (
  <svg width="36" height="27" viewBox="0 0 36 27">
    <path d="M0 1a1 1 0 0 1 1-1h34a1 1 0 0 1 1 1v25a1 1 0 0 1-1 1H1a1 1 0 0 1-1-1z" fill="#474747" />
    <path d="M0 0h12v5H0z" fill="#cfcfcf" /><path d="M12 0h12v5H12z" fill="#9a9a9a" /><path d="M24 0h12v5H24z" fill="#6c6c6c" />
    <path d="M5 9l6 6-6 7" fill="none" stroke="#cfcfcf" strokeWidth="3" /><path d="M17 19.500h12V23H17z" fill="#ececec" />
  </svg>
);

const GitApp = () => (
  <svg width="36" height="36" viewBox="0 0 36 36">
    <path d="M18 .5 26 8.500 18 15l-8-6.500z" fill="#f77f80" /><path d="M27 9.500l8.500 8.500-8.500 8-7-8z" fill="#8fd460" />
    <path d="M9 9.500 16 18l-7 8L.5 18z" fill="#7fb0f8" /><path d="M18 19.500l8 7.500-8 8.500L10 27z" fill="#ffe27d" />
    <path d="M14 8l4 3.500v14M18 12l7 6" stroke="#202020" strokeWidth="2" fill="none" />
    <circle cx="18" cy="25.500" r="2.600" fill="#202020" /><circle cx="25.500" cy="18" r="2.600" fill="#202020" /><circle cx="18" cy="11.500" r="2" fill="#202020" />
  </svg>
);

const apps: { id: string; icon: React.ReactNode; mark?: 'open' | 'active' }[] = [
  { id: 'taskview', icon: <TaskView /> },
  { id: 'chat', icon: <ChatApp /> },
  { id: 'explorer', icon: <Explorer />, mark: 'open' },
  { id: 'store', icon: <Store /> },
  { id: 'phone', icon: <PhoneLink /> },
  { id: 'chrome', icon: <Chrome /> },
  { id: 'code', icon: <VsCode />, mark: 'open' },
  { id: 'whatsapp', icon: <WhatsApp />, mark: 'open' },
  { id: 'pycharm', icon: <PyCharmBox>PC</PyCharmBox> },
  { id: 'chrome-m', icon: <><Chrome /><ProfileChip>M</ProfileChip></>, mark: 'active' },
  { id: 'terminal', icon: <Terminal />, mark: 'open' },
  { id: 'chrome-2', icon: <Chrome />, mark: 'open' },
  { id: 'git', icon: <GitApp />, mark: 'open' },
];

const WeatherIcon = () => (
  <svg width="36" height="34" viewBox="0 0 36 34">
    <defs>
      <linearGradient id="sun" x1="0" y1="0" x2="1" y2="1"><stop offset="0" stopColor="#f9b233" /><stop offset="1" stopColor="#ee6f12" /></linearGradient>
      <linearGradient id="cl" x1="0" y1="0" x2="0" y2="1"><stop offset="0" stopColor="#a9c0f5" /><stop offset="1" stopColor="#e9f0fd" /></linearGradient>
    </defs>
    <circle cx="18" cy="18" r="15.500" fill="url(#sun)" />
    <path d="M4 13a4 4 0 0 1 0-7.500A6 6 0 0 1 15 4a4.700 4.700 0 0 1 5 5c0 2.500-1.500 4-4 4z" fill="url(#cl)" />
    <path d="M20 32a4 4 0 0 1 0-8 6 6 0 0 1 10.500-1.500A4.800 4.800 0 0 1 36 27c0 3-1.500 5-4.500 5z" fill="url(#cl)" />
  </svg>
);

const Taskbar = () => (
  <TaskbarRow>
    <Weather>
      <WeatherIcon />
      <TwoLines $dim><Label $size={16.700}>90°F</Label><Label $size={16.900}>Partly sunny</Label></TwoLines>
    </Weather>
    <Cell $w={35}>
      <svg width="35" height="35" viewBox="0 0 35 35">
        <defs><linearGradient id="win" gradientUnits="userSpaceOnUse" x1="0" y1="0" x2="35" y2="35"><stop offset="0" stopColor="#84e3ff" /><stop offset=".5" stopColor="#3cc4fb" /><stop offset="1" stopColor="#0a8ff5" /></linearGradient></defs>
        <path d="M0 1a1 1 0 0 1 1-1h15.800v16.800H0zM18.200 0H34a1 1 0 0 1 1 1v15.800H18.200zM0 18.200h16.800V35H1a1 1 0 0 1-1-1zM18.200 18.200H35V34a1 1 0 0 1-1 1H18.200z" fill="url(#win)" />
      </svg>
    </Cell>
    <SearchPill>
      <svg width="22" height="23" viewBox="0 0 22 23" fill="none" stroke="#f0f0f0" strokeWidth="2.200"><circle cx="9.500" cy="9.500" r="8.200" /><path d="M15 16l6.500 6" /></svg>
      <Cell $w={16} />
      <Label $size={19.300}>Search</Label>
      <Spacer />
      <svg width="30" height="31" viewBox="0 0 30 31">
        <defs><linearGradient id="bing" x1="0" y1="0" x2=".4" y2="1"><stop offset="0" stopColor="#3ad1f5" /><stop offset="1" stopColor="#1450d8" /></linearGradient></defs>
        <path d="M15.500 1.200A13.500 13.500 0 1 1 9.500 27L1.500 29.500 3.700 22A13.500 13.500 0 0 1 15.500 1.200z" fill="#fff" stroke="url(#bing)" strokeWidth="1.800" />
        <path d="M9.500 5.500l3.600 1.500v11.500l-3.600 3.700z" fill="#1b62dc" /><path d="M15 10.500l5.500 3c2.500 2 2 5-.5 6.500L12.500 24c-2.500 0-3.500-1-3.300-2.300L16.500 17z" fill="#2b9af0" />
      </svg>
    </SearchPill>
    {apps.map(a => <AppCell key={a.id} $mark={a.mark}>{a.icon}</AppCell>)}
    <Spacer />
    <Cell $w={48} $up={2}><svg width="17" height="10" viewBox="0 0 17 10" fill="none" stroke="#fff" strokeWidth="2"><path d="M1 9l7.500-7.500L16 9" /></svg></Cell>
    <Cell $w={48}>
      <svg width="24" height="17" viewBox="0 0 24 17"><path d="M5 15a5 5 0 0 1-.5-9.500A7.500 7.500 0 0 1 18 5l3 5-12 6z" fill="#8d8d8d" /><path d="M4 16.500c-4-.5-4-5 0-6L16 7a5 5 0 0 1 4 1.500c5 0 5 8 0 8z" fill="#f2f2f2" /></svg>
    </Cell>
    <Cell $w={48} $up={2}>
      <svg width="24" height="18" viewBox="0 0 24 18" fill="none" stroke="#fff" strokeWidth="1.700"><path d="M1 6.500a15.500 15.500 0 0 1 22 0M4.300 9.800a11 11 0 0 1 15.400 0M7.700 13a6.200 6.200 0 0 1 8.600 0" /><circle cx="12" cy="15.500" r="1.500" fill="#fff" stroke="none" /></svg>
    </Cell>
    <Cell $w={24} $up={2}>
      <svg width="24" height="20" viewBox="0 0 24 20" fill="none" stroke="#fff" strokeWidth="1.600"><path d="M1 7h4l5-5.500v17L5 13H1z" /><path d="M13 7a4.500 4.500 0 0 1 0 6M16 4.500a8 8 0 0 1 0 11" /><path d="M19.500 2a12 12 0 0 1 0 16" stroke="#6b6b6b" /></svg>
    </Cell>
    <Cell $w={48} $up={2}>
      <svg width="24" height="16" viewBox="0 0 24 16"><rect x=".9" y=".9" width="19" height="14" rx="3" fill="none" stroke="#fff" strokeWidth="1.700" /><rect x="3.500" y="3.500" width="10" height="9" fill="#fff" /><path d="M21.500 5.500 23.500 6.500v3l-2 1z" fill="#fff" stroke="#fff" /></svg>
    </Cell>
    <Cell $w={12} />
    <Cell $w={84}><TwoLines $right><Label $size={17.100}>8:54 PM</Label><Label $size={17.300}>8/31/2023</Label></TwoLines></Cell>
    <Cell $w={29} />
  </TaskbarRow>
);

export default function App() {
  return (
    <Screen>
      <GlobalStyle />
      <Tabs />
      <AddressBar />
      <CognosHeader />
      <StoryToolbar />
      <WorkspaceArea />
      <Taskbar />
      <Blackbox />
    </Screen>
  );
}
